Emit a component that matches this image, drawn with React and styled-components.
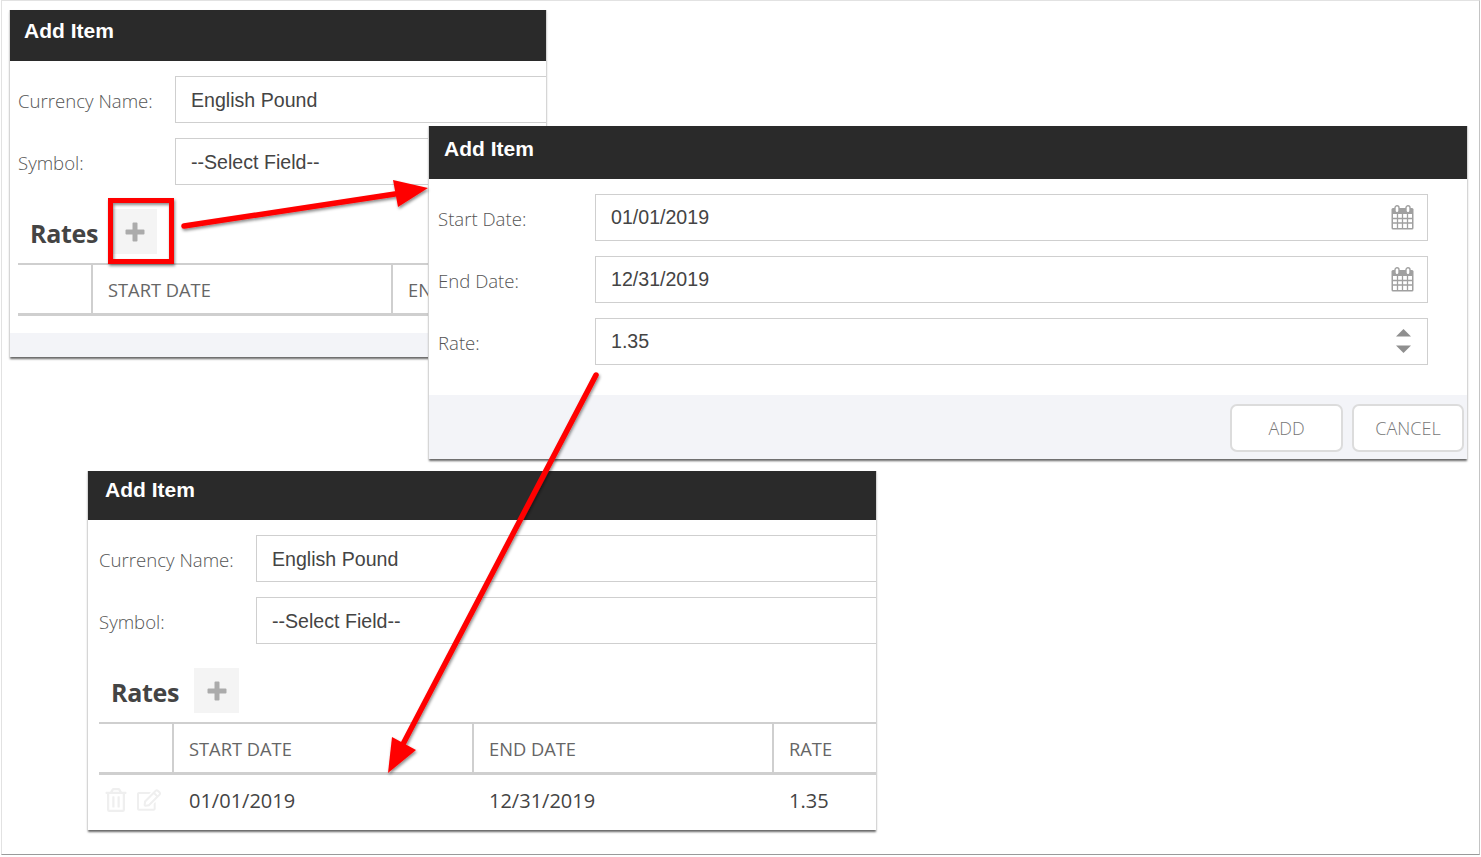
import React from 'react';
import styled, { createGlobalStyle } from 'styled-components';
import { FaRegTrashAlt, FaRegEdit } from 'react-icons/fa';

const Global = createGlobalStyle`
  html, body { margin: 0; padding: 0; background: #fff; overflow: hidden; }
  body { font-family: "Open Sans", "Liberation Sans", sans-serif; }
`;

const Canvas = styled.div`
  position: relative;
  width: 1477px;
  height: 853px;
  margin: 0 0 0 1px;
  border: 1px solid #e2e2e2;
  border-bottom: 1px solid #9a9a9a;
  border-right: 1px solid #c4c4c4;
  background: #fff;
  overflow: hidden;
`;

const Window = styled.section`
  position: absolute;
  left: ${p => p.$left}px;
  top: ${p => p.$top}px;
  width: ${p => p.$width}px;
  height: ${p => p.$height}px;
  display: flex;
  flex-direction: column;
  background: #fff;
  overflow: hidden;
  box-shadow: 1px 0 0 #d6d6d6, -1px 0 0 #d6d6d6, 0 2px 2px #666;
  z-index: ${p => p.$z};
`;

const Header = styled.header`
  flex: none;
  height: ${p => p.$height}px;
  box-sizing: border-box;
  background: #2a2a2a;
  color: #fff;
  font: 700 21px/24px "Liberation Sans", Arial, sans-serif;
  padding: ${p => p.$top}px 0 0 ${p => p.$left}px;
`;

const Form = styled.div`
  flex: none;
  display: flex;
  flex-direction: column;
  gap: 15px;
  padding: 15px 0 0 ${p => p.$left}px;
`;

const Row = styled.div`
  display: flex;
  height: 47px;
  align-items: center;
`;

const Label = styled.label`
  flex: none;
  width: 157px;
  font-size: 18.6px;
  font-weight: 300;
  color: #555;
  padding-top: 1px;
`;

const Field = styled.div`
  flex: ${p => (p.$fixed ? `0 0 ${p.$fixed}px` : '1')};
  box-sizing: border-box;
  height: 47px;
  display: flex;
  align-items: center;
  justify-content: space-between;
  border: 1px solid #cfcfcf;
  border-right: ${p => (p.$open ? '0' : '1px solid #cfcfcf')};
  padding: ${p => (p.$open ? 1 : 0)}px ${p => p.$right || 15}px ${p => (p.$fixed ? 1 : 0)}px 15px;
  font: 400 19.6px "Liberation Sans", Arial, sans-serif;
  color: #444;
  margin-right: ${p => (p.$open ? '-1px' : '0')};
`;

const RatesBar = styled.div`
  flex: none;
  display: flex;
  align-items: center;
  height: 45px;
  margin-top: 24px;
  padding-left: ${p => p.$left}px;
  gap: ${p => p.$gap}px;
`;

const RatesTitle = styled.h2`
  margin: 2px 0 0;
  font-size: 25px;
  font-weight: 700;
  letter-spacing: -0.3px;
  color: #444;
`;

const AddButton = styled.div`
  width: 45px;
  height: 45px;
  display: flex;
  align-items: center;
  justify-content: center;
  background: #f4f4f4;
`;

const Table = styled.div`
  flex: none;
  margin-top: 9px;
  margin-left: ${p => p.$left}px;
  border-top: 2px solid #cfcfcf;
`;

const HeadRow = styled.div`
  display: grid;
  grid-template-columns: 73px 300px 300px 1fr;
  height: 48px;
  border-bottom: 3px solid #cfcfcf;
`;

const HeadCell = styled.div`
  display: flex;
  align-items: center;
  padding: 0 0 0 15px;
  border-left: ${p => (p.$first ? '0' : '2px solid #cfcfcf')};
  font-size: 18.3px;
  font-weight: 400;
  color: #666;
  white-space: nowrap;
`;

const BodyRow = styled.div`
  display: grid;
  grid-template-columns: 73px 300px 300px 1fr;
  height: 54px;
  align-items: center;
`;

const BodyCell = styled.div`
  padding: 0 0 4px 17px;
  font-size: 20px;
  color: #444;
`;

const Actions = styled.div`
  display: flex;
  align-items: center;
  gap: 9px;
  padding: 0 0 4px 5px;
  color: #efefef;
  font-size: 24px;
`;

const Spacer = styled.div`
  flex: 1;
`;

const Footer = styled.footer`
  flex: none;
  height: ${p => p.$height}px;
  background: #f3f4f8;
  display: flex;
  justify-content: flex-end;
  align-items: flex-start;
  gap: 9px;
  padding: 9px 3px 0 0;
  box-sizing: border-box;
`;

const Button = styled.button`
  width: ${p => p.$width}px;
  height: 48px;
  background: #fff;
  border: 2px solid #dcdcdc;
  border-radius: 7px;
  font: 300 18px "Open Sans", sans-serif;
  color: #777;
  padding: 0;
`;

const Overlay = styled.svg`
  position: absolute;
  left: -2px;
  top: -1px;
  width: 1481px;
  height: 857px;
  z-index: 10;
  pointer-events: none;
`;

const Calendar = () => (
  <svg width="23" height="25" viewBox="0 0 23 25" fill="none">
    <rect x="0.5" y="3" width="22" height="21.5" rx="1.5" fill="#a0a0a0" />
    <rect x="2" y="9" width="19" height="14" fill="#fff" />
    <path d="M6.5 9v14M11.5 9v14M16.5 9v14M2 13.5h19M2 18h19" stroke="#a0a0a0" strokeWidth="1.3" />
    <rect x="4" y="0.8" width="4" height="7" rx="2" fill="#fff" stroke="#a0a0a0" strokeWidth="1.4" />
    <rect x="15" y="0.8" width="4" height="7" rx="2" fill="#fff" stroke="#a0a0a0" strokeWidth="1.4" />
  </svg>
);

const Spinner = () => (
  <svg width="15" height="24" viewBox="0 0 15 24" fill="#8f8f8f">
    <path d="M7.5 0 15 7.5H0Z" />
    <path d="M7.5 24 15 16.5H0Z" />
  </svg>
);

const PlusIcon = () => (
  <svg width="20" height="20" viewBox="0 0 20 20" fill="#ababab">
    <path d="M7.5 1.5a1 1 0 0 1 1-1h3a1 1 0 0 1 1 1v6h6a1 1 0 0 1 1 1v3a1 1 0 0 1-1 1h-6v6a1 1 0 0 1-1 1h-3a1 1 0 0 1-1-1v-6h-6a1 1 0 0 1-1-1v-3a1 1 0 0 1 1-1h6Z" />
  </svg>
);

const CurrencyForm = ({ left }) => (
  <Form $left={left}>
    <Row>
      <Label>Currency Name:</Label>
      <Field $open>English Pound</Field>
    </Row>
    <Row>
      <Label>Symbol:</Label>
      <Field $open>--Select Field--</Field>
    </Row>
  </Form>
);

const Rates = ({ left, gap, tableLeft, rows }) => (
  <>
    <RatesBar $left={left} $gap={gap}>
      <RatesTitle>Rates</RatesTitle>
      <AddButton><PlusIcon /></AddButton>
    </RatesBar>
    <Table $left={tableLeft}>
      <HeadRow>
        <HeadCell $first />
        <HeadCell>START DATE</HeadCell>
        <HeadCell>END DATE</HeadCell>
        <HeadCell>RATE</HeadCell>
      </HeadRow>
      {rows.map(r => (
        <BodyRow key={r.start}>
          <Actions><FaRegTrashAlt /><FaRegEdit /></Actions>
          <BodyCell>{r.start}</BodyCell>
          <BodyCell>{r.end}</BodyCell>
          <BodyCell>{r.rate}</BodyCell>
        </BodyRow>
      ))}
    </Table>
  </>
);

export default function App() {
  return (
    <>
      <Global />
      <Canvas>
        <Window $left={8} $top={9} $width={536} $height={347} $z={1}>
          <Header $height={51} $top={9} $left={14}>Add Item</Header>
          <CurrencyForm left={8} />
          <Rates left={20} gap={14} tableLeft={8} rows={[]} />
          <Spacer />
          <Footer $height={24} />
        </Window>

        <Window $left={427} $top={125} $width={1038} $height={333} $z={2}>
          <Header $height={53} $top={11} $left={15}>Add Item</Header>
          <Form $left={9}>
            <Row>
              <Label>Start Date:</Label>
              <Field $fixed={833} $right={13}>01/01/2019<Calendar /></Field>
            </Row>
            <Row>
              <Label>End Date:</Label>
              <Field $fixed={833} $right={13}>12/31/2019<Calendar /></Field>
            </Row>
            <Row>
              <Label>Rate:</Label>
              <Field $fixed={833} $right={16}>1.35<Spinner /></Field>
            </Row>
          </Form>
          <Spacer />
          <Footer $height={64}>
            <Button $width={113}>ADD</Button>
            <Button $width={112}>CANCEL</Button>
          </Footer>
        </Window>

        <Window $left={86} $top={470} $width={788} $height={359} $z={1}>
          <Header $height={49} $top={7} $left={17}>Add Item</Header>
          <CurrencyForm left={11} />
          <Rates left={23} gap={15} tableLeft={11} rows={[{ start: '01/01/2019', end: '12/31/2019', rate: '1.35' }]} />
        </Window>

        <Overlay viewBox="0 0 1481 857">
          <defs>
            <filter id="arrowShadow" x="-10%" y="-10%" width="120%" height="120%">
              <feDropShadow dx="1" dy="2" stdDeviation="1.5" floodColor="#000" floodOpacity="0.45" />
            </filter>
          </defs>
          <g filter="url(#arrowShadow)">
            <rect x="110.5" y="200.5" width="61" height="61" fill="none" stroke="#f00" strokeWidth="5" />
            <path d="M184 226 395 194" stroke="#f00" strokeWidth="5.5" strokeLinecap="round" />
            <path d="M428 188 393 180 398 207Z" fill="#f00" />
            <path d="M596 375 402 746" stroke="#f00" strokeWidth="5.5" strokeLinecap="round" />
            <path d="M388 773 392 737 416 750Z" fill="#f00" />
          </g>
        </Overlay>
      </Canvas>
    </>
  );
}
